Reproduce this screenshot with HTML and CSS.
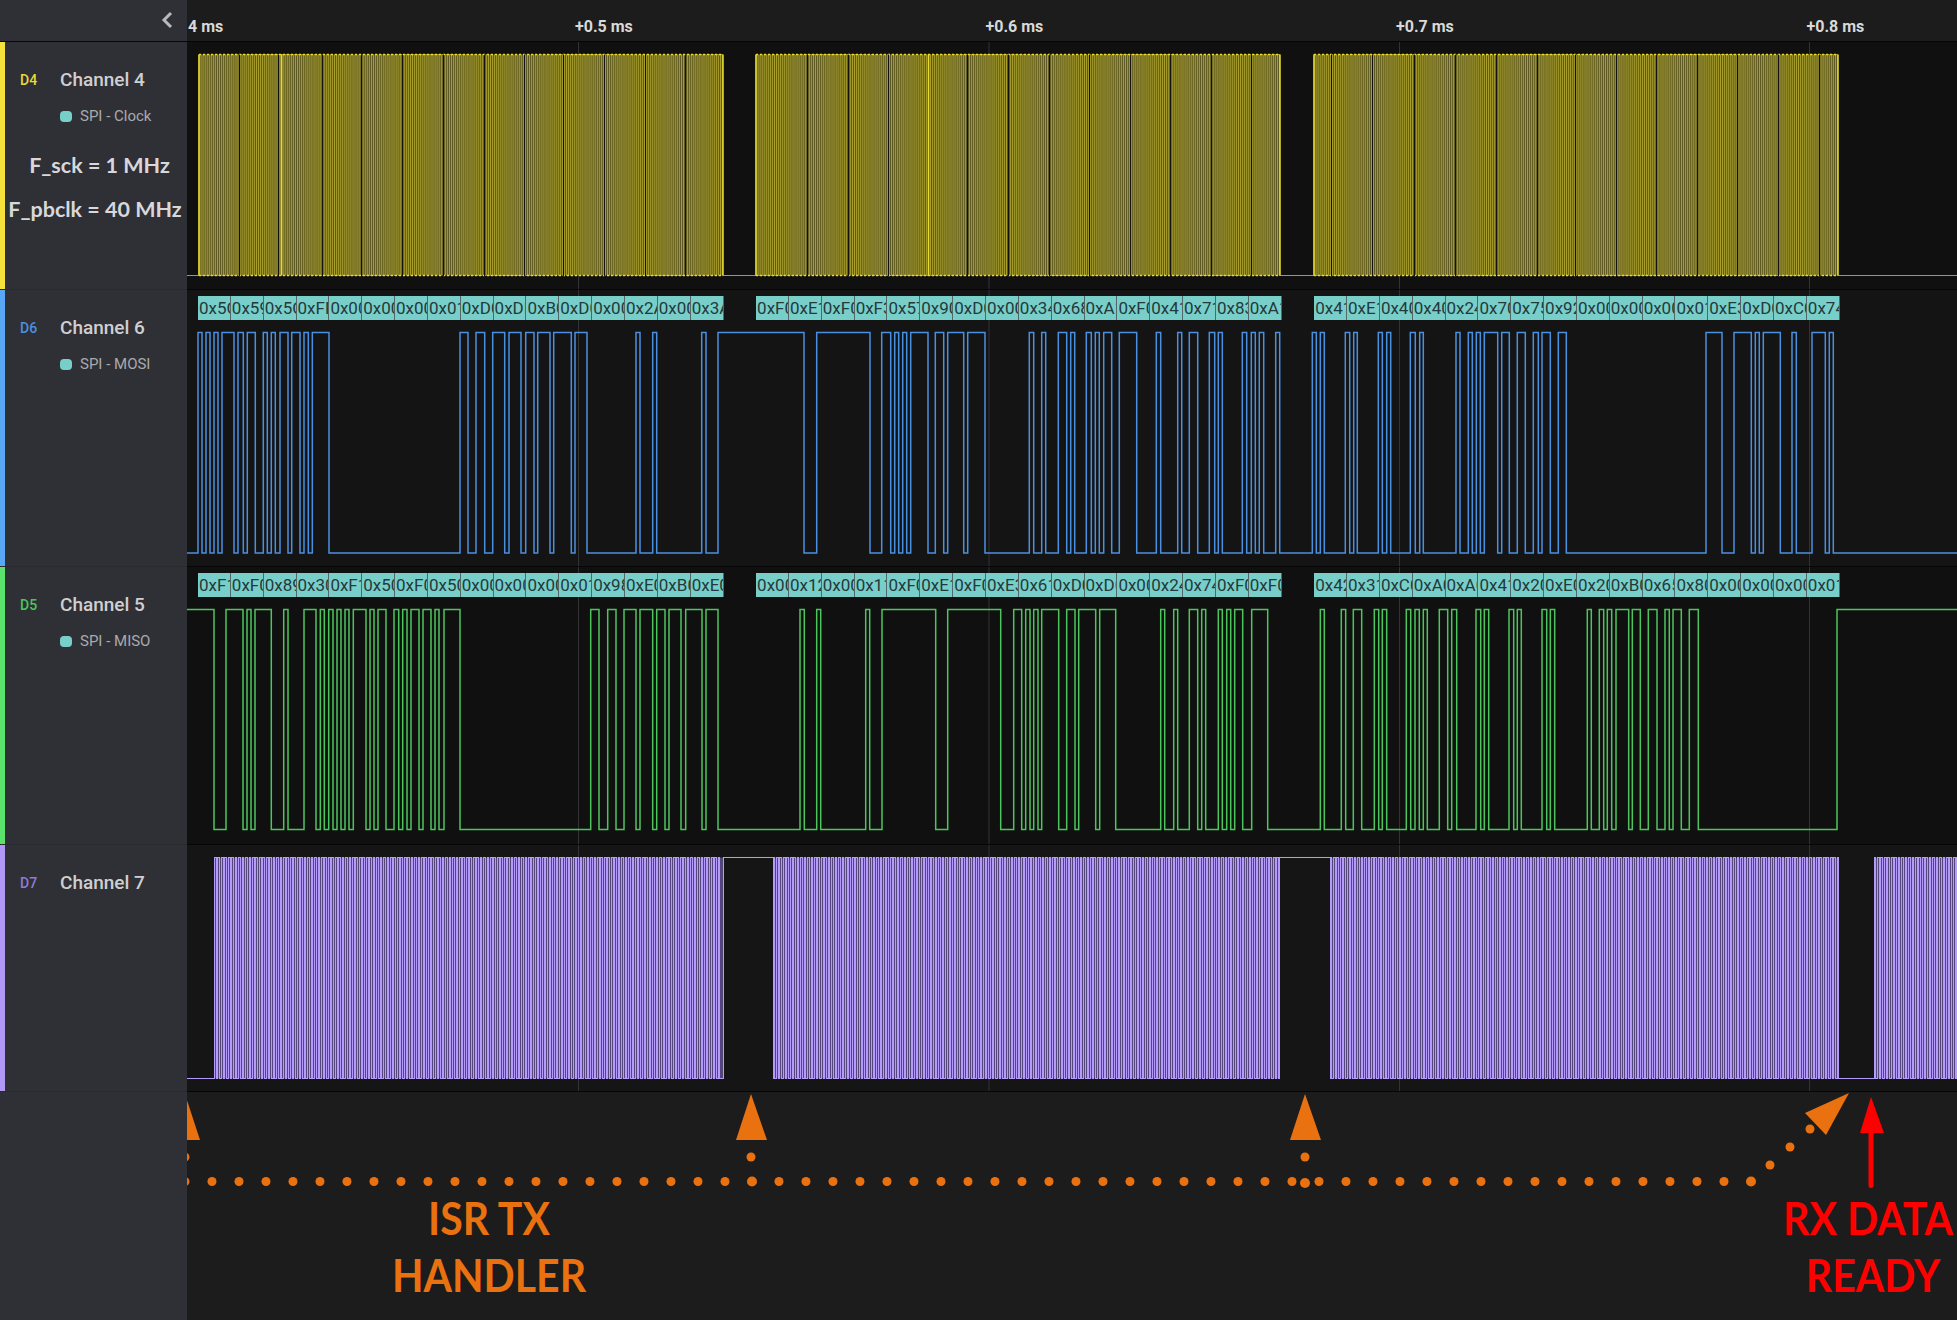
FILE: index.html
```html
<!DOCTYPE html>
<html lang="en">

<head>
    <meta charset="UTF-8">
    <meta name="viewport" content="width=device-width, initial-scale=1.0">
    <title>SPI capture</title>
    <link rel="stylesheet" href="styles.css">
</head>

<body>
    <div class="top">
        <div class="top-left">
            <svg class="chevron" width="14" height="20" viewBox="0 0 14 20">
                <polyline points="11,3 4,10 11,17" />
            </svg>
        </div>
        <div class="ruler">
            <span class="mark mark-first">4 ms</span>
            <span class="mark">+0.5 ms</span>
            <span class="mark">+0.6 ms</span>
            <span class="mark">+0.7 ms</span>
            <span class="mark">+0.8 ms</span>
        </div>
    </div>

    <div class="row row-d4">
        <div class="info">
            <div class="name"><span class="pin">D4</span><span class="title">Channel 4</span></div>
            <div class="tag"><i class="dot"></i>SPI - Clock</div>
            <div class="note note-sck">F_sck = 1 MHz</div>
            <div class="note">F_pbclk = 40 MHz</div>
        </div>
        <div class="wave" id="wave-d4"></div>
    </div>

    <div class="row row-d6">
        <div class="info">
            <div class="name"><span class="pin">D6</span><span class="title">Channel 6</span></div>
            <div class="tag"><i class="dot"></i>SPI - MOSI</div>
        </div>
        <div class="wave" id="wave-d6"></div>
    </div>

    <div class="row row-d5">
        <div class="info">
            <div class="name"><span class="pin">D5</span><span class="title">Channel 5</span></div>
            <div class="tag"><i class="dot"></i>SPI - MISO</div>
        </div>
        <div class="wave" id="wave-d5"></div>
    </div>

    <div class="row row-d7">
        <div class="info">
            <div class="name"><span class="pin">D7</span><span class="title">Channel 7</span></div>
        </div>
        <div class="wave" id="wave-d7"></div>
    </div>

    <div class="bottom">
        <div class="bottom-left"></div>
        <div class="notes">
            <svg class="marks" viewBox="187 1092 1770 228" width="1770" height="228">
                <g id="dots" fill="#ea7110"></g>
                <g fill="#ea7110">
                    <polygon points="185,1094 200,1140 170,1140" />
                    <polygon points="751,1094 767,1140 736,1140" />
                    <polygon points="1305,1094 1321,1140 1290,1140" />
                    <polygon points="1849,1093 1805,1113 1826,1135" />
                </g>
                <g fill="#ff0000">
                    <polygon points="1871,1097 1884,1133 1860,1133" />
                    <rect x="1868.5" y="1130" width="5" height="58" rx="2.5" />
                </g>
            </svg>
            <div class="call call-isr">ISR TX<br>HANDLER</div>
            <div class="call call-rx"><span class="call-wide">RX DATA</span><br>READY</div>
        </div>
    </div>

    <script src="app.js"></script>
</body>

</html>
```

FILE: styles.css
```css
* {
    padding: 0;
    margin: 0;
    box-sizing: border-box;
}

body {
    width: 1957px;
    height: 1320px;
    overflow: hidden;
    background: #1c1c1c;
    font-family: Roboto, "Liberation Sans", sans-serif;
}

.top {
    display: flex;
    height: 42px;
    border-bottom: 1px solid #060606;
}

.top-left {
    width: 187px;
    background: #2f3035;
    display: flex;
    justify-content: flex-end;
    padding: 10px 13px 0 0;
}

.chevron polyline {
    fill: none;
    stroke: #b9b9bb;
    stroke-width: 3;
}

.ruler {
    flex: 1;
    display: flex;
    background: #1c1c1c;
    padding-top: 18px;
    padding-left: 1px;
    overflow: hidden;
}

.mark {
    width: 410.5px;
    flex: none;
    font-size: 16px;
    line-height: 18px;
    font-weight: 700;
    color: #d9d9d9;
}

.mark-first {
    width: 387px;
}

.row {
    display: flex;
}

.row-d4 {
    height: 248px;
    --pin: #f5e23b;
    --text: #e6da3a;
    --bg: #101010;
}

.row-d6 {
    height: 277px;
    --pin: #58a8f5;
    --text: #4a90e0;
    --bg: #141414;
}

.row-d5 {
    height: 278px;
    --pin: #5be26c;
    --text: #4cc55c;
    --bg: #101010;
}

.row-d7 {
    height: 247px;
    --pin: #b197f6;
    --text: #9279d8;
    --bg: #151515;
}

.info {
    width: 187px;
    background: #2f3035;
    box-shadow: inset 5px 0 0 var(--pin);
    border-bottom: 1px solid #292a2e;
    padding: 25px 0 0 20px;
}

.name {
    display: flex;
    align-items: center;
    height: 24px;
}

.pin {
    width: 40px;
    padding-top: 2px;
    font-size: 14px;
    font-weight: 500;
    color: var(--text);
}

.title {
    font-size: 19px;
    font-weight: 500;
    color: #cfcfd1;
}

.tag {
    display: flex;
    align-items: center;
    margin: 15px 0 0 40px;
    height: 20px;
    font-size: 15px;
    color: #a9aaad;
}

.dot {
    width: 12px;
    height: 11px;
    margin-right: 8px;
    border-radius: 4px;
    background: #78cfca;
}

.note {
    margin: 12px 0 0 -17px;
    font-family: Lato, "Open Sans", sans-serif;
    font-size: 21.5px;
    line-height: 32px;
    font-weight: 700;
    text-align: center;
    color: #d8d8da;
    white-space: nowrap;
}

.note-sck {
    margin-top: 23px;
    padding-left: 9px;
}

.wave {
    position: relative;
    flex: 1;
    height: 100%;
    background: var(--bg);
    border-bottom: 1px solid #060606;
    overflow: hidden;
}

.trace {
    position: absolute;
    left: 0;
    top: 0;
}

.trace line {
    stroke: #333336;
    stroke-width: 1;
}

.trace path {
    fill: none;
    stroke: var(--text);
    stroke-width: 1.5;
}

/* D4 toggles faster than the pixels can show, so it reads as an olive band */
.row-d4 .trace path {
    stroke: #a89e2c;
    stroke-width: 1;
}

.trace .burst {
    fill: #5e5922;
    stroke: none;
}

.trace .cap {
    stroke: #e9dc2e;
    stroke-width: 1.5;
    stroke-dasharray: 2 2;
}

.trace .gap {
    stroke: #121212;
    stroke-width: 1;
}

.trace .edge {
    stroke: #e9dc2e;
    stroke-width: 1.5;
}

.row-d7 .trace path {
    stroke: #b49af9;
    stroke-width: 1;
    shape-rendering: crispEdges;
}

.row-d7 .trace .burst {
    fill: #54467c;
}

.frames {
    position: relative;
    display: flex;
    gap: 32.6px;
    padding: 6px 0 0 11px;
}

.group {
    display: flex;
    flex: none;
}

.frame {
    width: 32.85px;
    height: 24px;
    overflow: hidden;
    flex: none;
    background: #78cfca;
    border-right: 1px solid #50686a;
    padding-left: 1px;
    font-size: 17px;
    line-height: 24px;
    color: #24393b;
    white-space: nowrap;
}

.bottom {
    display: flex;
    height: 228px;
}

.bottom-left {
    width: 187px;
    background: #2f3035;
}

.notes {
    position: relative;
    flex: 1;
    overflow: hidden;
    background: #1c1c1c;
}

.marks {
    display: block;
}

.call {
    position: absolute;
    top: 104px;
    width: 300px;
    font-family: Lato, "Open Sans", sans-serif;
    font-size: 41px;
    line-height: 50px;
    font-weight: 700;
    text-align: center;
    white-space: nowrap;
    transform: scaleY(1.14);
}

.call-wide {
    display: inline-block;
    margin-left: -10px;
}

.call-isr {
    left: 152px;
    color: #ea7110;
}

.call-rx {
    left: 1536px;
    color: #ff0000;
}
```

FILE: app.js
```js
var LEFT = 187;
var WIDTH = 1770;
var GRID = [578.5, 989, 1399.5, 1809.5];

// pulses read off the capture: offset in page px, edges at 3x
function at(offset, pulses) {
    return pulses.map(function (p) {
        return [offset + p[0] / 3, offset + p[1] / 3];
    });
}

function pulsePath(pulses, high, low) {
    var d = "M" + (LEFT - 2) + " " + low;
    pulses.forEach(function (p) {
        d += "H" + p[0].toFixed(1) + "V" + high + "H" + p[1].toFixed(1) + "V" + low;
    });
    return d + "H" + (LEFT + WIDTH + 2);
}

// square wave between two x, half is the time between edges
function clock(from, to, half) {
    var pulses = [];
    for (var x = from; x + half < to; x += half * 2) {
        pulses.push([x, x + half]);
    }
    return pulses;
}

function vline(cls, x, y1, y2) {
    return '<line class="' + cls + '" x1="' + x + '" x2="' + x + '" y1="' + y1 + '" y2="' + y2 + '"></line>';
}

function hline(cls, x1, x2, y) {
    return '<line class="' + cls + '" x1="' + x1 + '" x2="' + x2 + '" y1="' + y + '" y2="' + y + '"></line>';
}

function band(from, to, high, low) {
    return '<rect class="burst" x="' + from + '" y="' + high + '" width="' + (to - from) + '" height="' + (low - high) + '"></rect>';
}

function draw(id, top, height, d, under, over) {
    var box = document.getElementById(id);
    var lines = GRID.map(function (x) {
        return vline("grid", x, top, top + height);
    }).join("");
    box.innerHTML = '<svg class="trace" width="' + WIDTH + '" height="' + height + '" viewBox="' + LEFT + " " + top + " " + WIDTH + " " + height + '">' +
        lines + (under || "") + '<path d="' + d + '"></path>' + (over || "") + "</svg>" + box.innerHTML;
}

function frames(id, groups) {
    var html = '<div class="frames">';
    groups.forEach(function (g) {
        html += '<div class="group">';
        g.split(" ").forEach(function (b) {
            html += '<div class="frame">0x' + b + "</div>";
        });
        html += "</div>";
    });
    document.getElementById(id).innerHTML = html + "</div>";
}

var mosi = [].concat(
    at(0, [[594, 606], [618, 630], [642, 654], [666, 702], [714, 730], [742, 766], [790, 802], [814, 826], [840, 864], [875, 900], [912, 925], [937, 987], [1380, 1404], [1428, 1454], [1478, 1514]]),
    at(500, [[27, 63], [77, 102], [113, 150], [161, 214], [225, 261], [408, 420], [458, 470], [605, 618], [654, 912], [950, 1110], [1145, 1172], [1184, 1196], [1208, 1220], [1232, 1284], [1306, 1331], [1343, 1391], [1403, 1455]]),
    at(1000, [[88, 101], [125, 137], [175, 200], [212, 224], [259, 274], [286, 298], [311, 335], [358, 410], [469, 482], [533, 545], [568, 593], [628, 644], [655, 667], [727, 740], [754, 766], [778, 791], [827, 839], [937, 949], [961, 973], [1036, 1049], [1061, 1072], [1135, 1147], [1160, 1172], [1231, 1246], [1259, 1270]]),
    at(1450, [[18, 30], [55, 67], [79, 91], [103, 143], [155, 178], [202, 226], [250, 265], [276, 301], [325, 349], [768, 816], [852, 904], [916, 928], [940, 991], [1026, 1039], [1086, 1126], [1138, 1150]])
);

var miso = [].concat(
    at(0, [[555, 642], [678, 729], [741, 753], [765, 814], [851, 864], [912, 948], [961, 973], [986, 999], [1011, 1023], [1035, 1047], [1060, 1098], [1110, 1122], [1134, 1158], [1182, 1196], [1208, 1221], [1233, 1257], [1269, 1293], [1305, 1317], [1332, 1380]]),
    at(500, [[272, 297], [323, 348], [372, 408], [420, 458], [470, 495], [507, 543], [557, 606], [618, 654], [900, 913], [950, 962], [1097, 1109], [1146, 1307], [1343, 1502]]),
    at(1000, [[41, 65], [77, 90], [101, 114], [125, 176], [200, 225], [236, 287], [299, 347], [482, 494], [521, 533], [568, 593], [605, 617], [655, 667], [680, 692], [704, 728], [755, 803], [961, 973], [1024, 1037], [1060, 1085], [1123, 1136], [1147, 1160], [1219, 1232], [1245, 1258], [1270, 1282], [1318, 1343]]),
    at(1450, [[5, 20], [78, 92], [103, 116], [177, 191], [202, 214], [276, 290], [301, 314], [412, 424], [448, 461], [472, 485], [498, 536], [547, 571], [595, 621], [645, 658], [669, 694], [718, 745], [1161, 1530]])
);

var sck = [].concat(clock(199, 723, 2.053), clock(756, 1280, 2.053), clock(1314, 1838, 2.053));

frames("wave-d6", [
    "5C 59 5C FF 00 00 00 01 D0 DB B0 D0 00 2A 00 3A",
    "F0 E1 F0 F3 57 90 D0 00 34 68 A1 F0 41 71 83 A1",
    "41 E1 40 40 24 70 75 92 00 00 00 01 E3 D0 C0 74"
]);
frames("wave-d5", [
    "F1 F0 89 30 F1 50 F0 50 00 00 00 01 98 E0 B0 E0",
    "00 12 00 11 F0 E1 F0 E3 61 D0 D0 00 24 74 F0 F0",
    "42 31 C0 A0 A0 41 20 E0 20 B0 65 80 00 00 00 01"
]);

// the clock bursts: band under the trace, dark beat lines and caps over it
var HIGH = 54.5;
var LOW = 275.5;
var bursts = [
    { from: 199, to: 723, gaps: [239, 278, 322, 361, 402, 443, 484, 524, 563, 604, 645, 685] },
    { from: 756, to: 1280, gaps: [807, 848, 888, 967, 1008, 1049, 1089, 1130, 1170, 1211, 1251] },
    { from: 1314, to: 1838, gaps: [1331, 1372, 1414, 1455, 1496, 1537, 1575, 1616, 1656, 1697, 1737, 1778, 1819] }
];
var under = "";
var over = "";
bursts.forEach(function (b) {
    under += band(b.from, b.to, HIGH, LOW);
    over += hline("cap", b.from, b.to, HIGH) + hline("cap", b.from, b.to, LOW);
    over += vline("edge", b.from, HIGH, LOW) + vline("edge", b.to, HIGH, LOW);
    b.gaps.forEach(function (x) {
        over += vline("gap", x + 0.5, HIGH, LOW + 1);
    });
});
[281.5, 928.5].forEach(function (x) {
    over += vline("edge", x, HIGH, LOW);
});

// D7 stays high across the first two gaps and low across the third
var D7_HIGH = 857.5;
var D7_LOW = 1078.5;
var flagRuns = [[214.5, 723], [773, 1279], [1330, 1839], [1874, 1960]];
var flag = [].concat(
    clock(214.5, 723, 1.725),
    [[723, 773]],
    clock(773, 1279, 1.725),
    [[1279, 1330]],
    clock(1330, 1839, 1.725),
    clock(1874, 1960, 1.725)
);
var flagUnder = flagRuns.map(function (r) {
    return band(r[0], r[1], D7_HIGH, D7_LOW);
}).join("");

draw("wave-d4", 42, 248, pulsePath(sck, HIGH, LOW), under, over);
draw("wave-d6", 290, 277, pulsePath(mosi, 332.5, 553));
draw("wave-d5", 567, 278, pulsePath(miso, 609.5, 829.5));
draw("wave-d7", 845, 247, pulsePath(flag, D7_HIGH, D7_LOW), flagUnder);

// dotted trail under the markers
var dots = [];
for (var n = -1; n <= 57; n++) {
    dots.push([212 + 27 * n, 1181.5, n === 20 || n === 57 ? 5 : 4.5]);
}
dots.push([185, 1157, 4.5], [751, 1157, 4.5], [1305, 1157, 4.5], [1305, 1183, 5], [1770, 1165, 4.5], [1790, 1147, 4.5], [1810, 1129, 4.5]);
document.getElementById("dots").innerHTML = dots.map(function (c) {
    return '<circle cx="' + c[0] + '" cy="' + c[1] + '" r="' + c[2] + '"></circle>';
}).join("");
```
